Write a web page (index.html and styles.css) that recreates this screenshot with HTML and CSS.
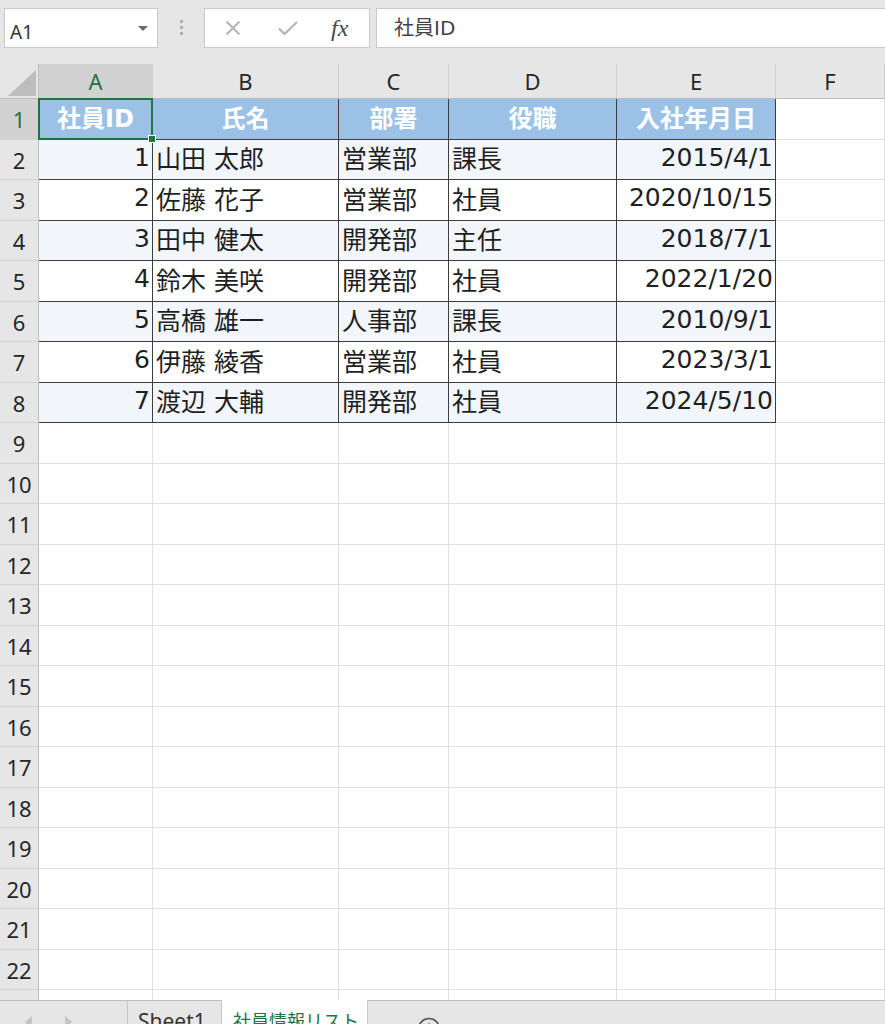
FILE: index.html
```html
<!DOCTYPE html>
<html>
  <head>
    <meta charset="utf-8">
    <title>社員情報リスト</title>
    <link rel="stylesheet" href="styles.css">
  </head>
  <body>
    <div class="toolbar">
      <div class="namebox"><span class="ref">A1</span><span class="caret"></span></div>
      <div class="grip"><span></span><span></span><span></span></div>
      <div class="fxbuttons">
        <svg class="cancel" width="16" height="16" viewBox="0 0 16 16"><path d="M1.5 1.5L14.5 14.5M14.5 1.5L1.5 14.5" stroke="#b4b4b4" stroke-width="2" fill="none"/></svg>
        <svg class="enter" width="20" height="14" viewBox="0 0 20 14"><path d="M1 7.5L6.5 13L19 1" stroke="#b4b4b4" stroke-width="2.2" fill="none"/></svg>
        <span class="fx">fx</span>
      </div>
      <div class="formula">社員ID</div>
    </div>

    <div class="sheetwrap">
      <div class="sheet">
        <div class="corner"><div class="tri"></div></div>
        <div class="ch sel">A</div>
        <div class="ch">B</div>
        <div class="ch">C</div>
        <div class="ch">D</div>
        <div class="ch">E</div>
        <div class="ch">F</div>

        <div class="rh sel">1</div>
        <div class="t th active">社員ID</div>
        <div class="t th">氏名</div>
        <div class="t th">部署</div>
        <div class="t th">役職</div>
        <div class="t th">入社年月日</div>
        <div></div>

        <div class="rh">2</div>
        <div class="t n z">1</div>
        <div class="t z">山田 太郎</div>
        <div class="t z">営業部</div>
        <div class="t z">課長</div>
        <div class="t n z">2015/4/1</div>
        <div></div>

        <div class="rh">3</div>
        <div class="t n">2</div>
        <div class="t">佐藤 花子</div>
        <div class="t">営業部</div>
        <div class="t">社員</div>
        <div class="t n">2020/10/15</div>
        <div></div>

        <div class="rh">4</div>
        <div class="t n z">3</div>
        <div class="t z">田中 健太</div>
        <div class="t z">開発部</div>
        <div class="t z">主任</div>
        <div class="t n z">2018/7/1</div>
        <div></div>

        <div class="rh">5</div>
        <div class="t n">4</div>
        <div class="t">鈴木 美咲</div>
        <div class="t">開発部</div>
        <div class="t">社員</div>
        <div class="t n">2022/1/20</div>
        <div></div>

        <div class="rh">6</div>
        <div class="t n z">5</div>
        <div class="t z">高橋 雄一</div>
        <div class="t z">人事部</div>
        <div class="t z">課長</div>
        <div class="t n z">2010/9/1</div>
        <div></div>

        <div class="rh">7</div>
        <div class="t n">6</div>
        <div class="t">伊藤 綾香</div>
        <div class="t">営業部</div>
        <div class="t">社員</div>
        <div class="t n">2023/3/1</div>
        <div></div>

        <div class="rh">8</div>
        <div class="t n z">7</div>
        <div class="t z">渡辺 大輔</div>
        <div class="t z">開発部</div>
        <div class="t z">社員</div>
        <div class="t n z">2024/5/10</div>
        <div></div>

        <div class="rh">9</div><div></div><div></div><div></div><div></div><div></div><div></div>
        <div class="rh">10</div><div></div><div></div><div></div><div></div><div></div><div></div>
        <div class="rh">11</div><div></div><div></div><div></div><div></div><div></div><div></div>
        <div class="rh">12</div><div></div><div></div><div></div><div></div><div></div><div></div>
        <div class="rh">13</div><div></div><div></div><div></div><div></div><div></div><div></div>
        <div class="rh">14</div><div></div><div></div><div></div><div></div><div></div><div></div>
        <div class="rh">15</div><div></div><div></div><div></div><div></div><div></div><div></div>
        <div class="rh">16</div><div></div><div></div><div></div><div></div><div></div><div></div>
        <div class="rh">17</div><div></div><div></div><div></div><div></div><div></div><div></div>
        <div class="rh">18</div><div></div><div></div><div></div><div></div><div></div><div></div>
        <div class="rh">19</div><div></div><div></div><div></div><div></div><div></div><div></div>
        <div class="rh">20</div><div></div><div></div><div></div><div></div><div></div><div></div>
        <div class="rh">21</div><div></div><div></div><div></div><div></div><div></div><div></div>
        <div class="rh">22</div><div></div><div></div><div></div><div></div><div></div><div></div>
        <div class="rh"></div><div></div><div></div><div></div><div></div><div></div><div></div>
      </div>
    </div>

    <div class="tabs">
      <div class="nav"><span class="prev"></span><span class="next"></span></div>
      <div class="tab">Sheet1</div>
      <div class="tab current">社員情報リスト</div>
      <div class="add">
        <svg width="24" height="24" viewBox="0 0 24 24"><circle cx="12" cy="12" r="10.5" stroke="#555" stroke-width="1.6" fill="none"/><path d="M12 6.5V17.5M6.5 12H17.5" stroke="#555" stroke-width="2" fill="none"/></svg>
      </div>
    </div>
  </body>
</html>
```

FILE: styles.css
```css
/* Page */
html, body {
  margin: 0;
  height: 1024px;
  overflow: hidden;
}
body {
  background: #e6e6e6;
  font-family: "Noto Sans", "Noto Sans CJK JP", sans-serif;
  color: #262626;
}

/* Name box + formula bar */
.toolbar {
  height: 64px;
  box-sizing: border-box;
  padding-top: 8px;
  display: flex;
  align-items: flex-start;
}
.namebox {
  margin-left: 4px;
  width: 154px;
  height: 40px;
  box-sizing: border-box;
  border: 1px solid #c8c8c8;
  background: #fff;
  display: flex;
  align-items: center;
  justify-content: space-between;
  padding: 0 9px 0 5px;
  font-size: 19px;
  color: #333;
}
.namebox .ref {
  margin-top: 7px;
}
.caret {
  width: 0;
  height: 0;
  border-left: 5px solid transparent;
  border-right: 5px solid transparent;
  border-top: 5px solid #6b6b6b;
}
.grip {
  width: 46px;
  padding-top: 12px;
  display: flex;
  flex-direction: column;
  align-items: center;
  gap: 3px;
}
.grip span {
  width: 3px;
  height: 3px;
  background: #b0b0b0;
}
.fxbuttons {
  width: 166px;
  height: 40px;
  box-sizing: border-box;
  border: 1px solid #c8c8c8;
  background: #fff;
  display: flex;
  align-items: center;
}
.fxbuttons .cancel {
  margin-left: 20px;
}
.fxbuttons .enter {
  margin-left: 37px;
}
.fx {
  margin-left: 33px;
  font-family: "Liberation Serif", serif;
  font-style: italic;
  font-size: 24px;
  color: #474747;
}
.formula {
  flex: 1;
  margin-left: 6px;
  margin-right: -2px;
  height: 40px;
  box-sizing: border-box;
  border: 1px solid #c8c8c8;
  background: #fff;
  padding: 0 0 3px 17px;
  display: flex;
  align-items: center;
  font-family: "DejaVu Sans", "Noto Sans CJK JP", sans-serif;
  font-size: 20px;
  color: #444;
}

/* Grid */
.sheetwrap {
  height: 936px;
  overflow: hidden;
  background: #fff;
}
.sheet {
  display: grid;
  grid-template-columns: 39px 114px 186px 110px 168px 159px 109px;
  grid-template-rows: 35px repeat(11, 41px 40px) 41px;
  font-family: "DejaVu Sans", "Noto Sans CJK JP", sans-serif;
  font-size: 25px;
  color: #1f1f1f;
}
.sheet > div {
  box-sizing: border-box;
  border-right: 1px solid #e1e1e1;
  border-bottom: 1px solid #e1e1e1;
  display: flex;
  align-items: center;
  padding: 0 3px;
  white-space: nowrap;
}
.sheet .corner {
  background: #e6e6e6;
  border-right-color: #bdbdbd;
  border-bottom-color: #bdbdbd;
  justify-content: flex-end;
  align-items: flex-end;
  padding: 0 2px 2px 0;
}
.corner .tri {
  width: 28px;
  height: 26px;
  background: #bdbdbd;
  clip-path: polygon(100% 0, 100% 100%, 0 100%);
}
.sheet .ch, .sheet .rh {
  background: #e6e6e6;
  justify-content: center;
  font-family: "Noto Sans", sans-serif;
  font-size: 22px;
  color: #262626;
}
.sheet .ch {
  border-right-color: #d0d0d0;
  border-bottom-color: #bdbdbd;
}
.sheet .rh {
  border-right-color: #bdbdbd;
  border-bottom-color: #d2d2d2;
}
.sheet .sel {
  background: #d2d2d2;
  color: #217346;
}

/* Table */
.sheet .t {
  border-right-color: #3d3d3d;
  border-bottom-color: #3d3d3d;
  padding-bottom: 5px;
}
.sheet .th {
  background: #9bc2e6;
  color: #fff;
  font-weight: bold;
  font-size: 24px;
  justify-content: center;
}
.sheet .n {
  justify-content: flex-end;
  padding-right: 2px;
}
.sheet .z {
  background: #f2f5f9;
}
.sheet .active {
  position: relative;
}
.active::after {
  content: "";
  position: absolute;
  left: -1px;
  top: -1px;
  right: -1px;
  bottom: -1px;
  border: 2px solid #217346;
}
.active::before {
  content: "";
  position: absolute;
  right: -4px;
  bottom: -4px;
  width: 6px;
  height: 6px;
  background: #217346;
  border: 1px solid #fff;
  z-index: 1;
}

/* Sheet tabs */
.tabs {
  height: 40px;
  display: flex;
  font-size: 21px;
  line-height: 21px;
}
.tabs > div {
  box-sizing: border-box;
  border-top: 1px solid #bdbdbd;
}
.nav {
  width: 128px;
  border-right: 1px solid #c6c6c6;
  display: flex;
  gap: 33px;
  padding: 15px 0 0 25px;
}
.prev, .next {
  width: 0;
  height: 0;
  border-top: 6px solid transparent;
  border-bottom: 6px solid transparent;
}
.prev {
  border-right: 7px solid #c4c4c4;
}
.next {
  border-left: 7px solid #c4c4c4;
}
.tab {
  width: 94px;
  border-right: 1px solid #c6c6c6;
  padding: 10px 0 0 10px;
  color: #333;
}
.tabs .current {
  width: 146px;
  border-top: none;
  background: #fff;
  color: #217346;
  font-size: 18px;
  padding: 11px 0 0 11px;
  border-right: 1px solid #c6c6c6;
}
.add {
  flex: 1;
  padding: 16px 0 0 49px;
}
```
